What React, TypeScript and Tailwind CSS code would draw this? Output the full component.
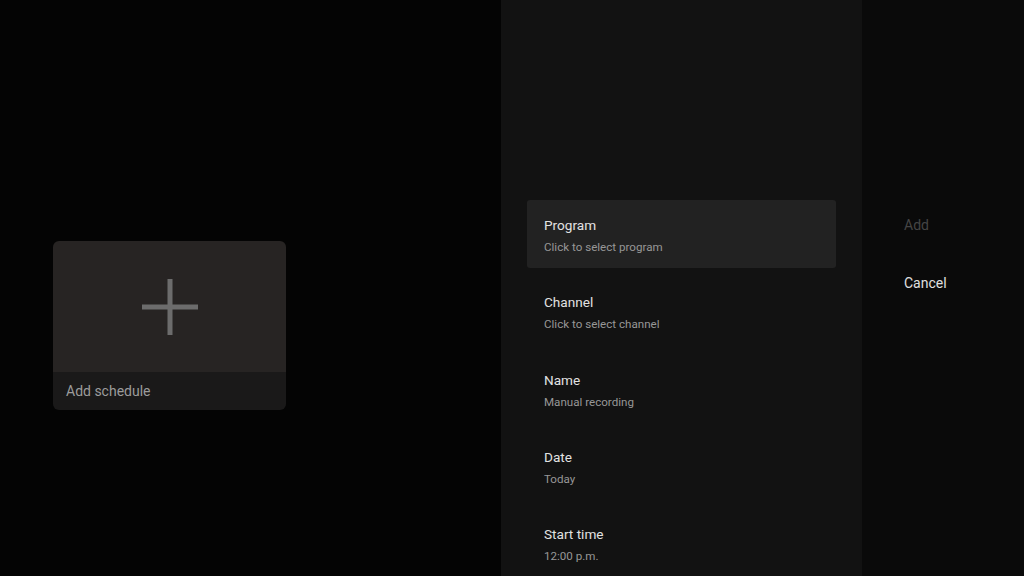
import type { JSX } from "react";

const fields = [
  { title: "Program", value: "Click to select program", focused: true },
  { title: "Channel", value: "Click to select channel" },
  { title: "Name", value: "Manual recording" },
  { title: "Date", value: "Today" },
  { title: "Start time", value: "12:00 p.m." },
];

function FieldRow({
  title,
  value,
  focused,
}: {
  title: string;
  value: string;
  focused?: boolean;
}): JSX.Element {
  return (
    <div
      className={`h-[68px] mb-[9.3px] shrink-0 rounded-[3px] px-[17px] pt-[16px] ${
        focused ? "bg-[#222222]" : ""
      }`}
    >
      <div className="text-[13.6px] leading-[18px] text-[#e2e2e2]">{title}</div>
      <div className="mt-[5px] text-[11.6px] leading-[16px] text-[#979797]">
        {value}
      </div>
    </div>
  );
}

export default function App(): JSX.Element {
  return (
    <div
      className="flex h-[576px] w-[1024px] overflow-hidden bg-[#040404]"
      style={{ fontFamily: "Roboto, 'Noto Sans', sans-serif" }}
    >
      {/* schedule grid */}
      <div className="w-[501px] shrink-0 pl-[53px] pt-[241px]">
        <div className="w-[233px] overflow-hidden rounded-[6px]">
          <div className="flex h-[131px] items-center justify-center bg-[#272423]">
            <svg width="58" height="58" viewBox="0 0 58 58">
              <rect x="26.5" y="1" width="5" height="56" fill="#6c6c6c" />
              <rect x="1" y="26.5" width="56" height="5" fill="#6c6c6c" />
            </svg>
          </div>
          <div className="flex h-[38px] items-center bg-[#1a1919] px-[13px] text-[14px] text-[#9c9c9c]">
            Add schedule
          </div>
        </div>
      </div>

      {/* form fields */}
      <div className="flex w-[361px] shrink-0 flex-col bg-[#121212] pl-[26px] pr-[26px] pt-[200px]">
        {fields.map((f) => (
          <FieldRow key={f.title} {...f} />
        ))}
      </div>

      {/* actions */}
      <div className="flex flex-1 flex-col bg-[#0a0a0a] pl-[42px] pt-[216px] text-[14px] leading-[18px]">
        <div className="text-[#454545]">Add</div>
        <div className="mt-[40px] text-[#e0e0e0]">Cancel</div>
      </div>
    </div>
  );
}
